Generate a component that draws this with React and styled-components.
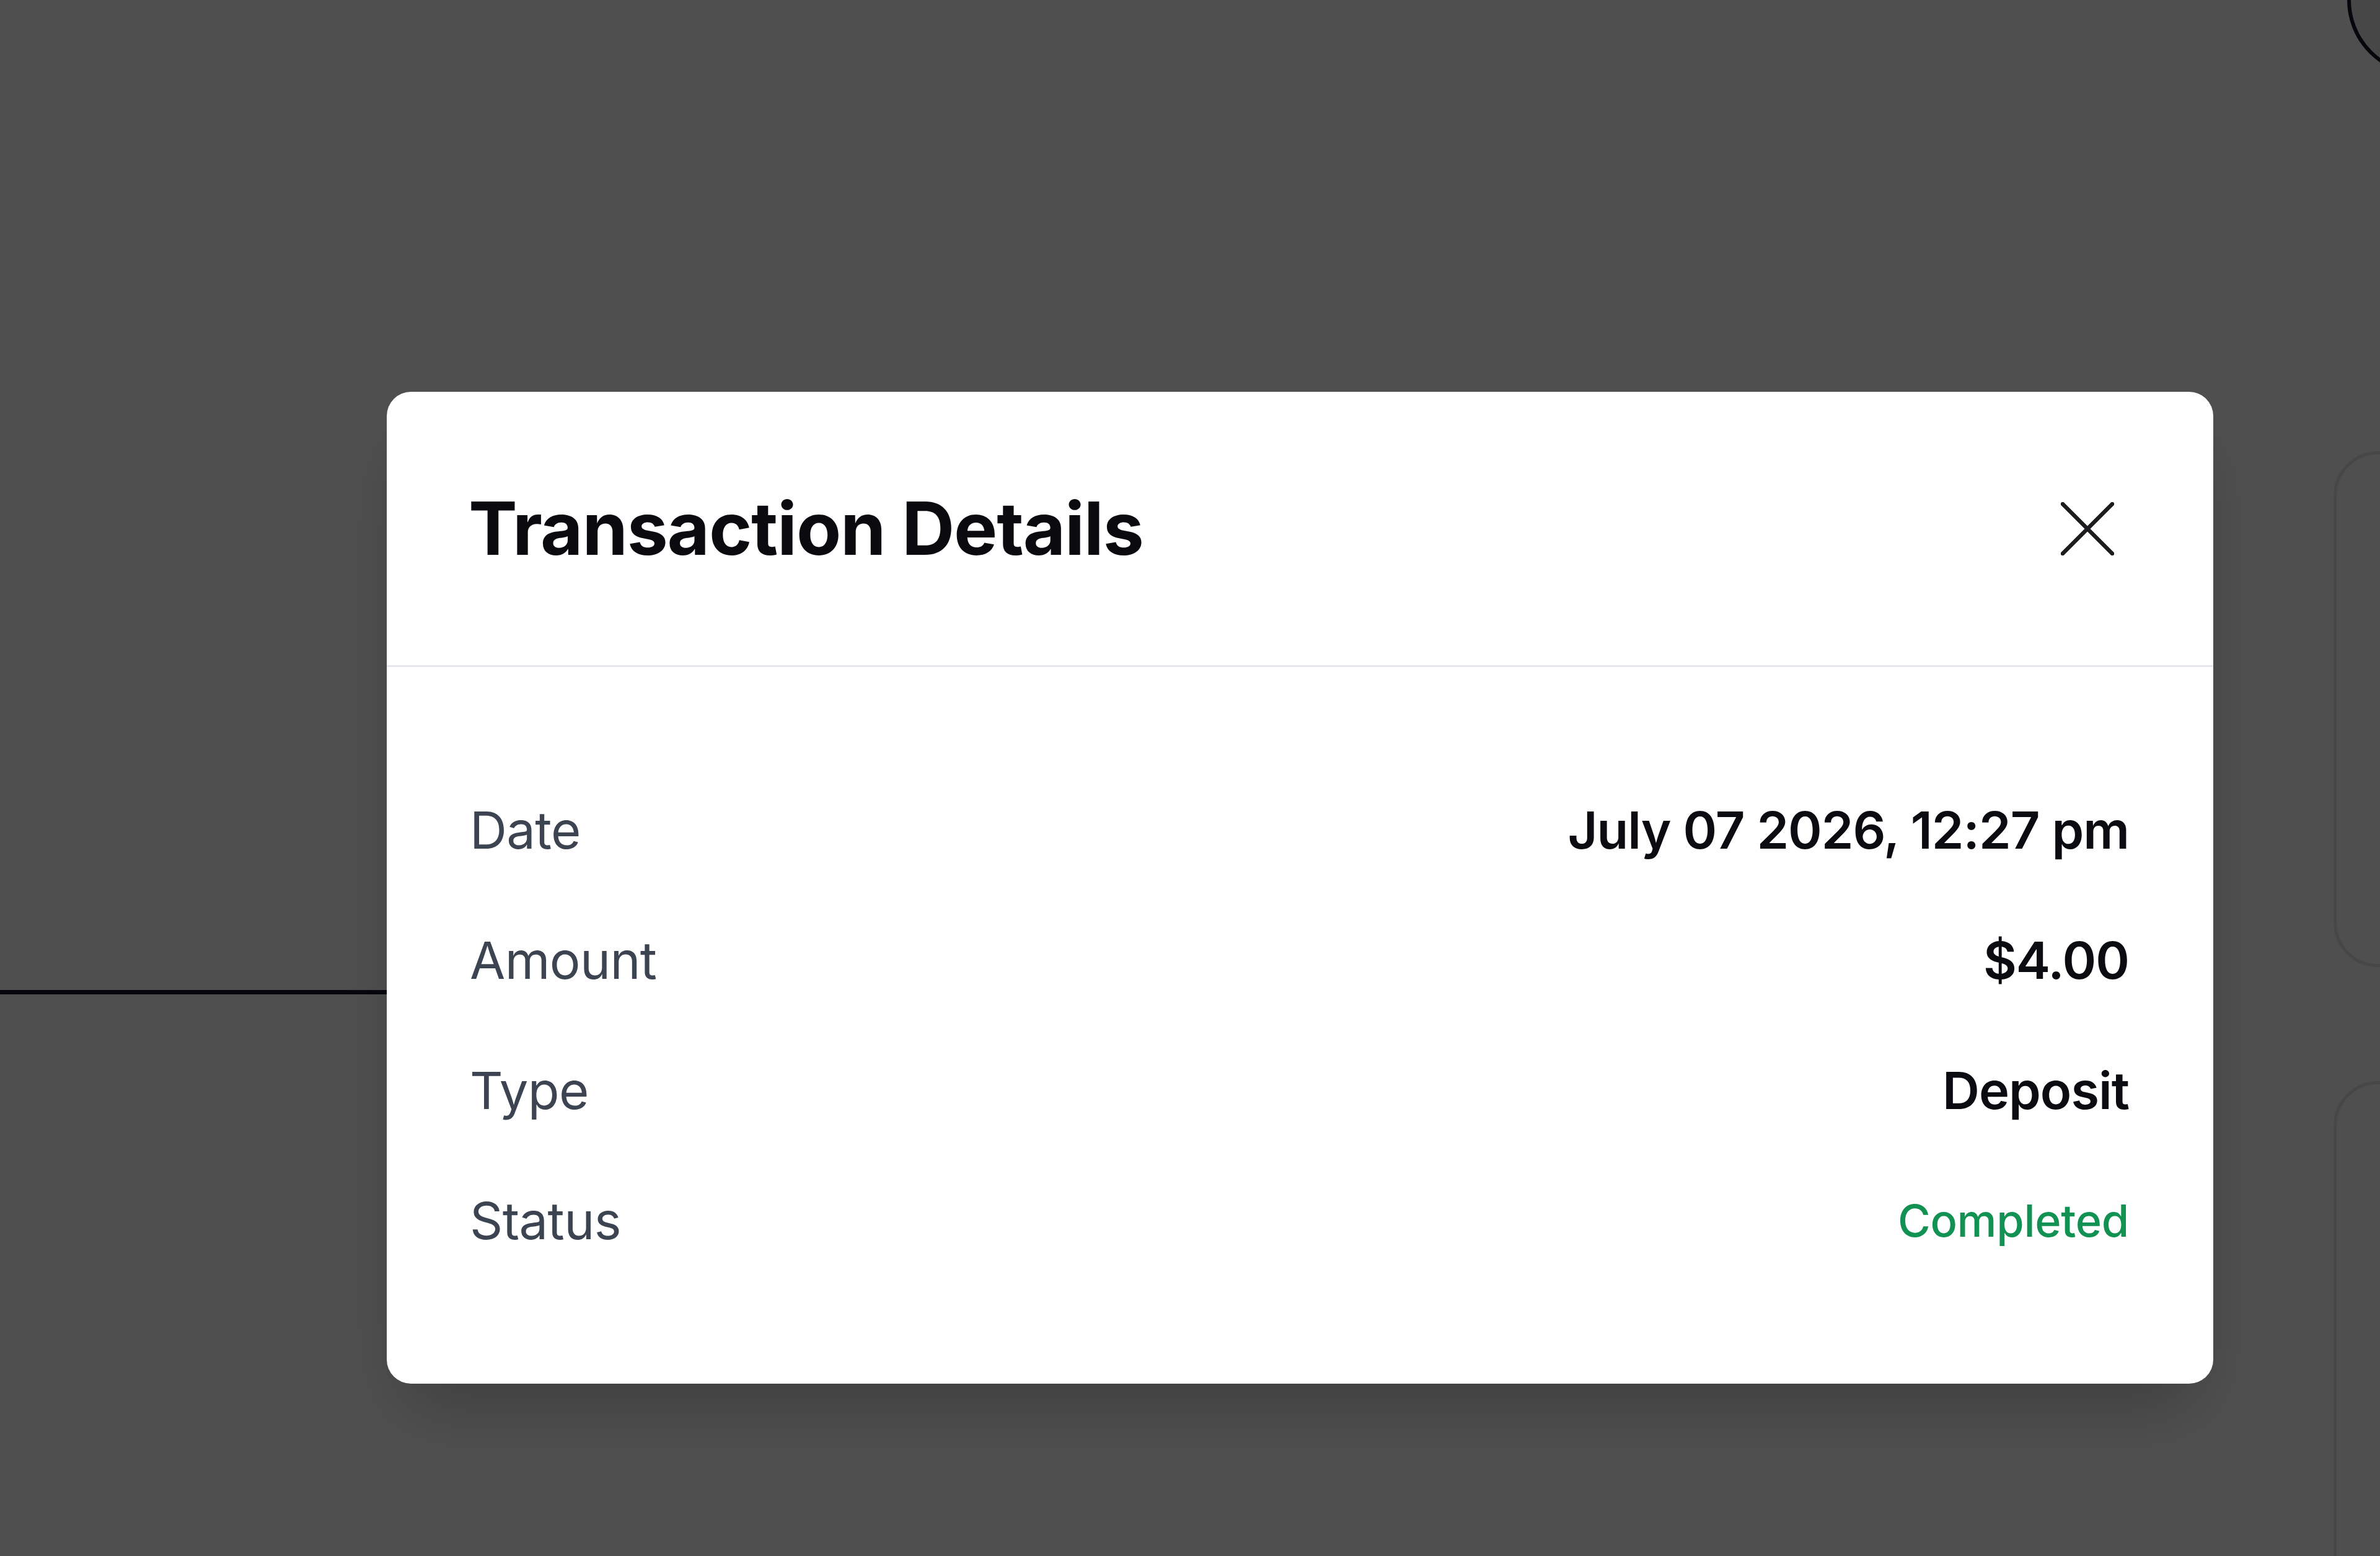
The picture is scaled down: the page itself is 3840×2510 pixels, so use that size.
import React from "react";
import styled, { createGlobalStyle } from "styled-components";

const GlobalStyle = createGlobalStyle`
  html, body {
    margin: 0;
    padding: 0;
    width: 3840px;
    height: 2510px;
    overflow: hidden;
    background: #ffffff;
    font-family: Inter, "Noto Sans", "Liberation Sans", sans-serif;
  }
  * {
    box-sizing: border-box;
  }
`;

const details = [
  { label: "Date", value: "July 07 2026, 12:27 pm" },
  { label: "Amount", value: "$4.00" },
  { label: "Type", value: "Deposit" },
  { label: "Status", value: "Completed", status: true },
];

function App() {
  return (
    <>
      <GlobalStyle />
      <Page>
        <Main>
          <TabLine />
        </Main>
        <Side>
          <SideCard />
          <SideCard $grow />
        </Side>
        <Avatar />
      </Page>

      <Overlay>
        <Modal role="dialog" aria-labelledby="tx-title">
          <Header>
            <Title id="tx-title">Transaction Details</Title>
            <CloseButton aria-label="Close">
              <svg width="86" height="86" viewBox="0 0 86 86" fill="none">
                <path
                  d="M3 3 L83 83 M83 3 L3 83"
                  stroke="#1c1c1e"
                  strokeWidth="6.5"
                  strokeLinecap="round"
                />
              </svg>
            </CloseButton>
          </Header>
          <Body>
            {details.map((d) => (
              <Row key={d.label}>
                <Label>{d.label}</Label>
                <Value $status={d.status}>{d.value}</Value>
              </Row>
            ))}
          </Body>
        </Modal>
      </Overlay>
    </>
  );
}

export default App;

const Page = styled.div`
  position: relative;
  display: flex;
  width: 3840px;
  height: 2510px;
  background: #ffffff;
`;

const Main = styled.div`
  flex: 1;
  padding: 1597px 900px 0 0;
`;

const TabLine = styled.div`
  height: 7px;
  background: #111827;
`;

const Side = styled.div`
  width: 75px;
  overflow: hidden;
  display: flex;
  flex-direction: column;
  gap: 184px;
  padding-top: 728px;
`;

const SideCard = styled.div`
  width: 400px;
  flex: ${(p) => (p.$grow ? "1" : "0 0 832px")};
  margin-bottom: ${(p) => (p.$grow ? "-200px" : "0")};
  border: 5px solid #e6e6e6;
  border-radius: 72px;
  background: #ffffff;
`;

const Avatar = styled.div`
  position: absolute;
  left: 3787px;
  top: -122px;
  width: 244px;
  height: 244px;
  border-radius: 50%;
  border: 6px solid #111827;
  background: #e4e4e4;
`;

const Overlay = styled.div`
  position: fixed;
  inset: 0;
  background: rgba(0, 0, 0, 0.69);
  display: flex;
  align-items: flex-start;
  padding: 632px 0 0 624px;
`;

const Modal = styled.div`
  width: 2947px;
  background: #ffffff;
  border-radius: 39px;
  box-shadow: 0 60px 120px -30px rgba(0, 0, 0, 0.25);
  overflow: hidden;
`;

const Header = styled.div`
  box-sizing: content-box;
  height: 441px;
  display: flex;
  align-items: center;
  justify-content: space-between;
  padding: 0 160px 0 132px;
  border-bottom: 3px solid #e5e7eb;
`;

const Title = styled.h2`
  margin: 0;
  font-size: 118px;
  line-height: 1.2;
  font-weight: 700;
  letter-spacing: -1.2px;
  color: #0a0a0f;
`;

const CloseButton = styled.button`
  display: flex;
  align-items: center;
  justify-content: center;
  padding: 0;
  border: none;
  background: none;
  cursor: pointer;
`;

const Body = styled.div`
  display: flex;
  flex-direction: column;
  gap: 86px;
  padding: 201px 136px 201px 134px;
`;

const Row = styled.div`
  display: flex;
  align-items: center;
  justify-content: space-between;
  height: 124px;
`;

const Label = styled.span`
  font-size: 83px;
  line-height: 124px;
  font-weight: 400;
  letter-spacing: -0.6px;
  color: #3d4451;
`;

const Value = styled.span`
  font-size: ${(p) => (p.$status ? "72px" : "83px")};
  line-height: 124px;
  font-weight: ${(p) => (p.$status ? 500 : 600)};
  letter-spacing: ${(p) => (p.$status ? "-0.3px" : "-1px")};
  color: ${(p) => (p.$status ? "#119152" : "#0b0b12")};
`;
